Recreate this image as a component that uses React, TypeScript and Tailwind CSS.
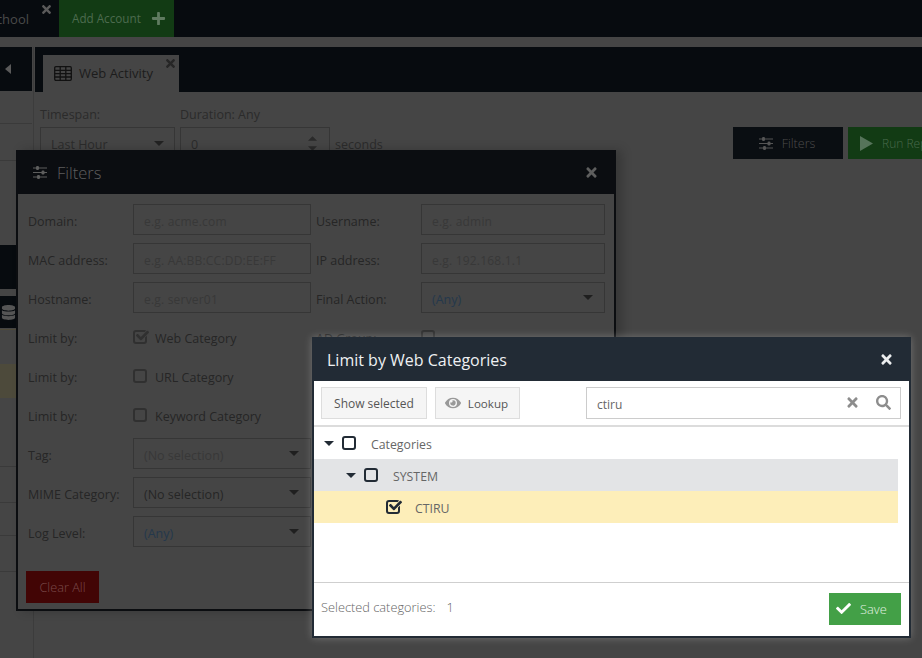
import React from "react";
import { FaTimes, FaPlus, FaEye, FaSearch, FaCheck, FaDatabase } from "react-icons/fa";

const Sliders = ({ c }: { c: string }) => (
  <svg viewBox="0 0 14 13" width="14" height="13" className="shrink-0">
    <g fill={c}>
      <rect x="0" y="1.5" width="14" height="1" />
      <rect x="0" y="6" width="14" height="1" />
      <rect x="0" y="10.5" width="14" height="1" />
      <rect x="3" y="0" width="3" height="4" rx="1.2" />
      <rect x="8.5" y="4.5" width="3" height="4" rx="1.2" />
      <rect x="4" y="9" width="3" height="4" rx="1.2" />
    </g>
  </svg>
);

const Caret = ({ c, dir = "down", w = 10, h = 5 }: { c: string; dir?: "down" | "up"; w?: number; h?: number }) => (
  <svg viewBox="0 0 10 5" width={w} height={h} className="shrink-0 block">
    <polygon points={dir === "down" ? "0,0 10,0 5,5" : "0,5 10,5 5,0"} fill={c} />
  </svg>
);

const TableIcon = () => (
  <svg viewBox="0 0 18 15" width="18" height="15" className="shrink-0" fill="none" stroke="#111" strokeWidth="1.3">
    <rect x="0.7" y="0.7" width="16.6" height="13.6" rx="1.2" />
    <path d="M0.7 4.3H17.3M0.7 7.7H17.3M0.7 11H17.3M6.2 0.7V14.3M11.8 0.7V14.3" />
  </svg>
);

const Box = ({ checked, c, bg }: { checked?: boolean; c: string; bg?: string }) => (
  <span className="relative block w-[14px] h-[14px] rounded-[3px] border-2 shrink-0" style={{ borderColor: c }}>
    {checked && (
      <FaCheck
        className="absolute left-[1px] top-[-3px] text-[13px]"
        style={{ color: c, stroke: bg, strokeWidth: 60, paintOrder: "stroke" }}
      />
    )}
  </span>
);

const Field = ({ label, ph, w = "w-[178px]" }: { label: string; ph: string; w?: string }) => (
  <div className="flex items-center h-[31px] mb-2">
    <span className="w-[105px] pt-[6px] text-[12.5px] text-[#262626] shrink-0">{label}</span>
    <div className={`${w} h-[31px] border border-[#363636] px-[10px] pt-[4px] flex items-center text-[12px] text-[#383838] tracking-[0.2px]`}>{ph}</div>
  </div>
);

const SelectBox = ({ label, value, color, w = "w-[178px]" }: { label: string; value: string; color: string; w?: string }) => (
  <div className="flex items-center h-[31px] mb-2">
    <span className="w-[105px] pt-[6px] text-[12.5px] text-[#262626] shrink-0">{label}</span>
    <div className={`${w} h-[31px] border border-[#363636] pl-[10px] pr-[11px] flex items-center justify-between text-[12.5px]`} style={{ color }}>
      <span className="pt-[6px]">{value}</span>
      <Caret c="#1f1f1f" />
    </div>
  </div>
);

const CheckRow = ({ label, checked }: { label: string; checked?: boolean }) => (
  <div className="flex items-center h-[31px] mb-2">
    <span className="w-[105px] pt-[6px] text-[12.5px] text-[#262626] shrink-0">Limit by:</span>
    <Box checked={checked} c="#303030" bg="#454545" />
    <span className="ml-2 pt-[6px] text-[12.5px] text-[#262626]">{label}</span>
  </div>
);

export default function App() {
  return (
    <div className="relative w-[922px] h-[658px] overflow-hidden bg-[#454545] font-['Open_Sans',sans-serif]">
      {/* Page behind the dialogs */}
      <div className="h-[37px] bg-[#070b0f] flex">
        <div className="relative w-[59px] flex items-center justify-end pr-[30px] pt-[2px] text-[13px] text-[#4a4a4a]">
          <span>chool</span>
          <FaTimes className="absolute right-[6px] top-[3px] text-[13px] text-[#5a5a5a]" />
        </div>
        <div className="w-[115px] bg-[#123b14] flex items-center pl-[13px] gap-[10px] text-[11.7px] text-[#4d6b4f]">
          <span>Add Account</span>
          <FaPlus className="text-[#5f7b60] text-[15px]" />
        </div>
      </div>
      <div className="flex mt-[10px] h-[611px]">
        <div className="w-[32px] shrink-0 flex flex-col">
          <div className="h-[44px] bg-[#070b0f] flex items-center pl-[5px]">
            <svg viewBox="0 0 6 10" width="6" height="10"><polygon points="6,0 6,10 0,5" fill="#5a5a5a" /></svg>
          </div>
          <div className="h-[33px] border-b border-[#3a3a3a]" />
          <div className="h-[37px] border-b border-[#3a3a3a]" />
          <div className="h-[84px]" />
          <div className="h-[44px] bg-[#070b0f]" />
          <div className="h-[7px]" />
          <div className="h-[32px] bg-[#070b0f] flex items-center pl-[1px]">
            <FaDatabase className="text-[#555] text-[15px]" />
          </div>
          <div className="h-[35px] border-t border-[#4e4a3a] mt-[1px]" />
          <div className="h-[34px] bg-[#4d4a3b]" />
          <div className="h-[69px] border-b border-[#3a3a3a]" />
          <div className="h-[36px] border-b border-[#3a3a3a]" />
          <div className="h-[33px] border-b border-[#3a3a3a]" />
          <div className="h-[36px] border-b border-[#3a3a3a]" />
        </div>
        <div className="w-[1px] bg-[#3c3c3c] ml-[1px]" />
        <div className="flex-1 ml-[1px] flex flex-col">
          <div className="h-[45px] bg-[#070b0f] flex items-end pl-[8px]">
            <div className="relative w-[136px] h-[37px] bg-[#454545] flex items-center pl-[11px] gap-[7px] text-[13px] text-[#1c1c1c]">
              <TableIcon />
              <span>Web Activity</span>
              <FaTimes className="absolute right-[2px] top-[2px] text-[13px] text-[#262626]" />
            </div>
          </div>
          <div className="flex pl-[5px] pt-[15px] text-[12.5px] text-[#2b2b2b]">
            <div className="w-[135px]">
              <div className="h-[20px] leading-[15px]">Timespan:</div>
              <div className="h-[32px] border border-[#363636] pl-[10px] pr-[10px] flex items-center justify-between">
                <span className="pt-[4px]">Last Hour</span>
                <Caret c="#222" />
              </div>
            </div>
            <div className="ml-[5px] w-[150px]">
              <div className="h-[20px] leading-[15px]">Duration: Any</div>
              <div className="h-[32px] border border-[#363636] pl-[10px] pr-[12px] flex items-center justify-between">
                <span className="pt-[4px]">0</span>
                <span className="flex flex-col items-center gap-[5px]">
                  <Caret c="#2a2a2a" dir="up" w={9} h={5} />
                  <Caret c="#2a2a2a" w={9} h={5} />
                </span>
              </div>
            </div>
            <div className="ml-[5px] pt-[24px] h-[52px] flex items-center">seconds</div>
            <div className="ml-auto pt-[20px] flex gap-[5px]">
              <div className="w-[110px] h-[32px] bg-[#0a0e12] flex items-center justify-center gap-[9px] pr-[2px] text-[12.5px] font-light text-[#4c4c4c]">
                <Sliders c="#555" />
                <span className="pt-[2px]">Filters</span>
              </div>
              <div className="w-[74px] h-[32px] bg-[#123b14] flex items-center pl-[12px] gap-[9px] text-[12px] font-light text-[#4a6a4c] whitespace-nowrap overflow-hidden">
                <svg viewBox="0 0 13 15" width="13" height="15" className="shrink-0"><polygon points="0,0 13,7.5 0,15" fill="#56745a" /></svg>
                <span className="pt-[2px]">Run Report</span>
              </div>
            </div>
          </div>
        </div>
      </div>

      {/* Filters dialog */}
      <div className="absolute left-[16px] top-[150px] w-[600px] h-[461px] bg-[#454545] border-x-2 border-b-2 border-[#0b0d10] shadow-[6px_0_10px_rgba(0,0,0,0.2)]">
        <div className="-mx-[2px] h-[44px] bg-[#0b0d11] flex items-center justify-between pl-[17px] pr-[17px]">
          <div className="flex items-center gap-[10px] text-[16.5px] font-light text-[#5e5e5e]">
            <Sliders c="#5e5e5e" />
            <span className="pt-[2px]">Filters</span>
          </div>
          <FaTimes className="text-[#5e5e5e] text-[15px]" />
        </div>
        <div className="pt-[10px] pl-[10px] flex">
          <div className="w-[288px]">
            <Field label="Domain:" ph="e.g. acme.com" />
            <Field label="MAC address:" ph="e.g. AA:BB:CC:DD:EE:FF" />
            <Field label="Hostname:" ph="e.g. server01" />
            <CheckRow label="Web Category" checked />
            <CheckRow label="URL Category" />
            <CheckRow label="Keyword Category" />
            <SelectBox label="Tag:" value="(No selection)" color="#383838" />
            <SelectBox label="MIME Category:" value="(No selection)" color="#262626" />
            <SelectBox label="Log Level:" value="(Any)" color="#24384c" />
          </div>
          <div className="w-[290px]">
            <Field label="Username:" ph="e.g. admin" w="w-[184px]" />
            <Field label="IP address:" ph="e.g. 192.168.1.1" w="w-[184px]" />
            <SelectBox label="Final Action:" value="(Any)" color="#24384c" w="w-[184px]" />
            <div className="flex items-center h-[31px]">
              <span className="w-[105px] pt-[6px] text-[12.5px] text-[#262626] shrink-0">AD Group:</span>
              <Box c="#303030" />
            </div>
          </div>
        </div>
        <div className="absolute left-[8px] top-[421px] w-[73px] h-[32px] bg-[#420505] flex items-center justify-center pt-[2px] text-[12.7px] font-light text-[#7a4a4a]">
          Clear All
        </div>
      </div>

      {/* Web categories dialog */}
      <div className="absolute left-[312px] top-[337px] w-[599px] h-[301px] bg-white border-x-2 border-b-2 border-[#222b35] shadow-[0_0_8px_rgba(255,255,255,0.25)] flex flex-col">
        <div className="-mx-[2px] h-[44px] shrink-0 bg-[#222b35] flex items-center justify-between pl-[15px] pr-[17px]">
          <span className="text-[16px] pt-[2px] text-[#eef0f2]">Limit by Web Categories</span>
          <FaTimes className="text-[#eceeef] text-[15px]" />
        </div>
        <div className="h-[46px] shrink-0 border-b-2 border-[#dcdcdc] flex items-center pl-[7px] pr-[8px] pb-[1px] text-[12px] text-[#555]">
          <div className="w-[106px] h-[32px] bg-[#f5f5f5] border border-[#ddd] flex items-center justify-center pt-[2px]">Show selected</div>
          <div className="ml-[8px] w-[85px] h-[32px] bg-[#f5f5f5] border border-[#ddd] flex items-center justify-center gap-[7px] pr-[2px]">
            <FaEye className="text-[#999] text-[16px]" />
            <span className="pt-[2px] text-[11.6px]">Lookup</span>
          </div>
          <div className="ml-auto w-[315px] h-[32px] border border-[#ccc] flex items-center pl-[10px] pr-[9px] text-[#666]">
            <span className="pt-[4px]">ctiru</span>
            <FaTimes className="ml-auto text-[#8d8d8d] text-[15px]" />
            <FaSearch className="ml-[16px] text-[#8d8d8d] text-[15px]" />
          </div>
        </div>
        <div className="w-[584px] text-[12.3px] text-[#666]">
          <div className="h-[32px] flex items-center pl-[10px]">
            <span className="w-[18px] shrink-0"><Caret c="#222b35" /></span>
            <Box c="#222b35" />
            <span className="ml-[15px] pt-[4px]">Categories</span>
          </div>
          <div className="h-[32px] bg-[#e3e4e6] flex items-center pl-[32px]">
            <span className="w-[18px] shrink-0"><Caret c="#222b35" /></span>
            <Box c="#222b35" />
            <span className="ml-[15px] pt-[4px]">SYSTEM</span>
          </div>
          <div className="h-[32px] bg-[#fdeeb9] flex items-center pl-[72px]">
            <Box checked c="#222b35" bg="#fdeeb9" />
            <span className="ml-[15px] pt-[4px]">CTIRU</span>
          </div>
        </div>
        <div className="mt-auto h-[54px] shrink-0 border-t border-[#cfcfcf] flex items-center justify-between pl-[7px] pr-[8px] text-[12.8px] font-light text-[#666]">
          <span className="-mt-[3px]">Selected categories:<span className="ml-[11px]">1</span></span>
          <div className="w-[72px] h-[32px] -mt-[2px] bg-[#43a047] flex items-center pl-[7px] gap-[9px] text-white/85">
            <FaCheck className="text-white text-[15px]" />
            <span className="pt-[2px]">Save</span>
          </div>
        </div>
      </div>
    </div>
  );
}
